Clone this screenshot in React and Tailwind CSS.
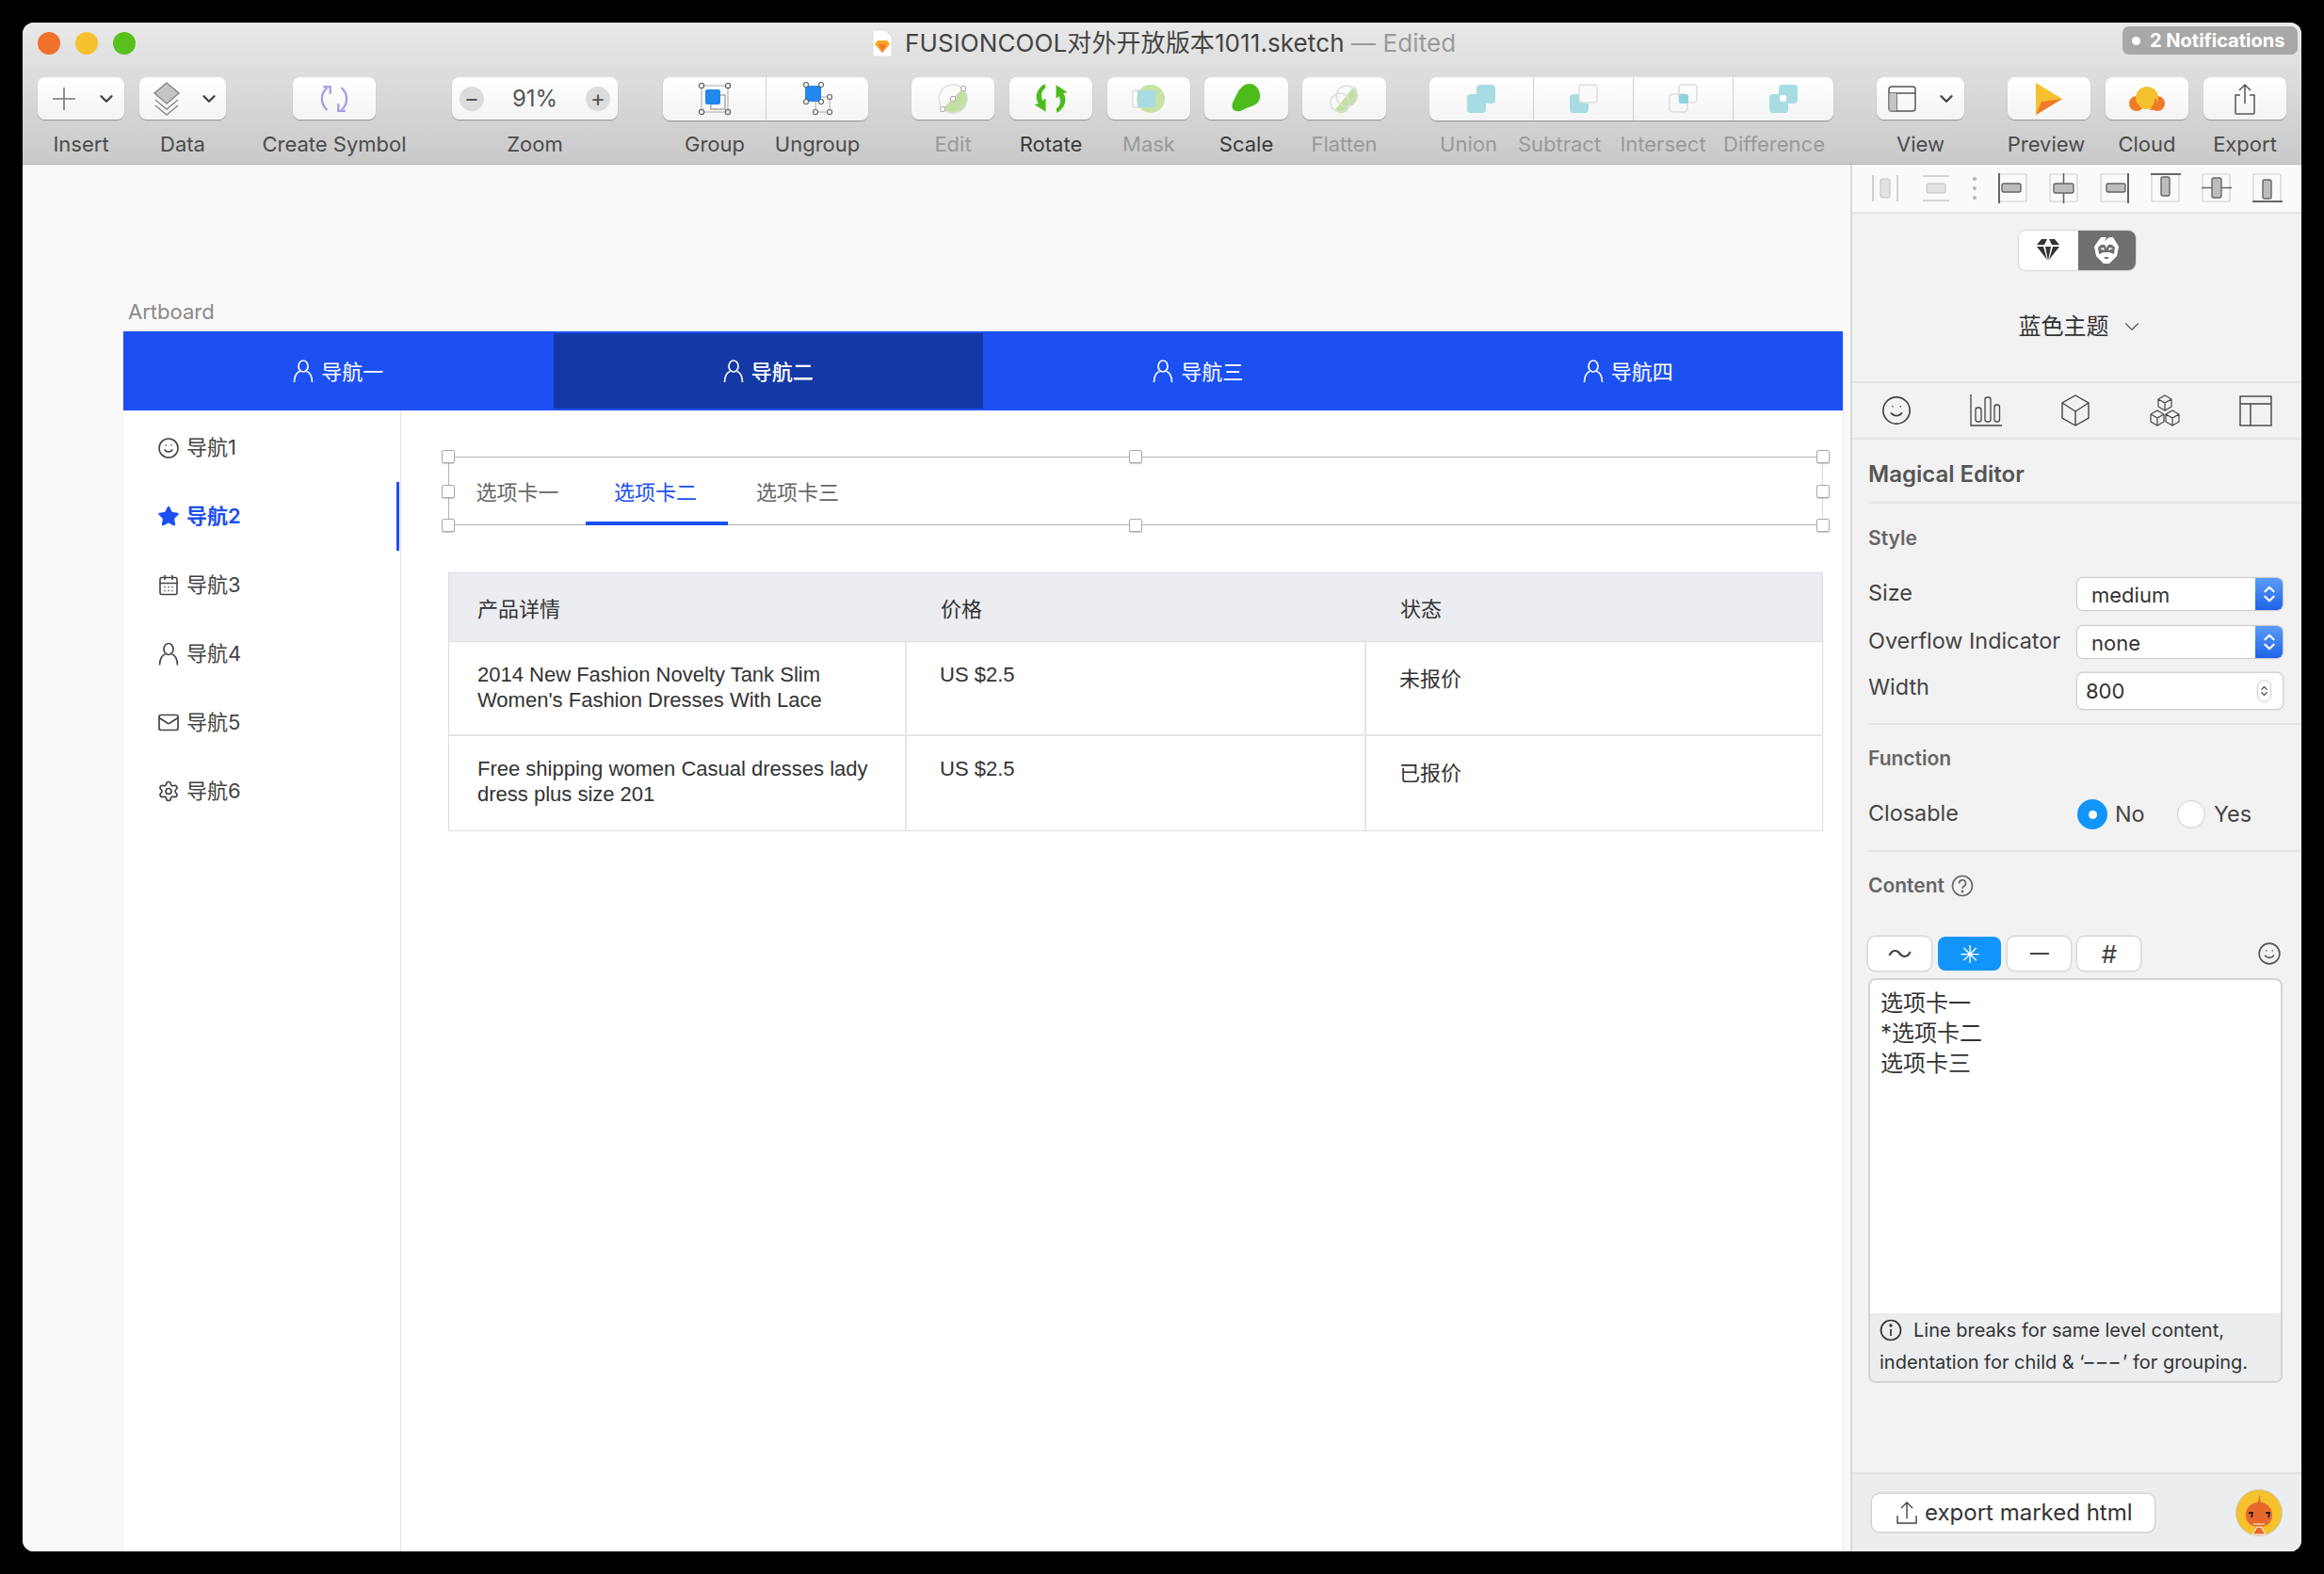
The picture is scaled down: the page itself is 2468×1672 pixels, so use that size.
import React from 'react';
import { ChevronDown, Smile, Star, CalendarDays, Mail, Settings, ChevronsUpDown } from 'lucide-react';

const Person = ({ className }) => (
  <svg viewBox="0 0 22 26" fill="none" stroke="currentColor" strokeWidth="1.7" className={className}>
    <ellipse cx="11" cy="8" rx="5" ry="6" />
    <path d="M1.5 25c0-7 3-11 6-11.5M20.5 25c0-7-3-11-6-11.5" />
  </svg>
);

function Tool({ label, w, ml = '', dim, dark, children }) {
  return (
    <div className={`flex flex-col items-center shrink-0 ${w} ${ml}`}>
      <div className="w-full h-[45px] bg-gradient-to-b from-white to-[#f4f4f4] rounded-[8px] shadow-[0_1px_1px_rgba(0,0,0,0.3)] flex items-center justify-center">
        {children}
      </div>
      <div className={`mt-[13px] text-[22px] leading-[26px] whitespace-nowrap ${dim ? 'text-[#9a9a9a]' : dark ? 'text-[#3a3a3a]' : 'text-[#4c4c4c]'}`}>{label}</div>
    </div>
  );
}

const IconEdit = () => (
  <svg width="34" height="34" viewBox="0 0 34 34" fill="none">
    <path d="M28 6.500A15 15 0 0 1 6.500 28z" fill="#c3e0a2" />
    <circle cx="17" cy="17" r="15" stroke="#dcdcdc" strokeWidth="1.4" />
    <path d="M28 6 6 28" stroke="#c8c8c8" strokeWidth="1" />
    {[[28, 6], [17, 17], [6, 28]].map(([x, y]) => <rect key={x} x={x - 2.5} y={y - 2.5} width="5" height="5" rx="1.500" fill="#fff" stroke="#aaa" />)}
  </svg>
);
const IconRotate = () => (
  <svg width="38" height="33" viewBox="0 0 34 30" fill="#4dbb1c">
    <path d="M11 1C3 6 1 14 5 20L1 21 12 28 12 15 9 17C7 12 8 7 12 5Z" />
    <path d="M23 29C31 24 33 16 29 10L33 9 22 2 22 15 25 13C27 18 26 23 22 25Z" />
  </svg>
);
const IconMask = () => (
  <svg width="36" height="32" viewBox="0 0 36 32">
    <rect x="1" y="7" width="8" height="18" rx="2" fill="#fff" stroke="#dcdcdc" strokeWidth="1.4" />
    <circle cx="20" cy="16" r="15" fill="#c6e2a5" />
    <rect x="6" y="7" width="19" height="18" rx="1" fill="#a9dbe2" />
  </svg>
);
const IconScale = () => (
  <svg width="31" height="31" viewBox="0 0 31 31">
    <path d="M19 0C26 0 31 7 30 15C29 21 24 23 18 25C14 26 10 30 5 29C0 28 0 24 1 20C3 16 5 12 7 8C10 3 14 0 19 0Z" fill="#4dbb1c" />
  </svg>
);
const IconFlatten = () => (
  <svg width="34" height="34" viewBox="0 0 34 34" fill="none">
    <path d="M26 3c5 4 6 10 4 15s-6 6-8 7c-1 5-6 8-11 7L6 29z" fill="#c3e0a2" />
    <circle cx="19" cy="14" r="11" stroke="#dcdcdc" strokeWidth="1.4" />
    <circle cx="12" cy="21" r="10" stroke="#dcdcdc" strokeWidth="1.4" />
    <path d="M27 3 6 29" stroke="#fff" strokeWidth="1" />
  </svg>
);

const Teal = ({ x, y }) => <rect x={x} y={y} width="20" height="20" rx="4" fill="#a8dce3" />;
const Ghost = ({ x, y, fill = 'none' }) => <rect x={x} y={y} width="19" height="19" rx="3.500" fill={fill} stroke="#dedede" strokeWidth="1.500" />;
const IconUnion = () => (
  <svg width="32" height="32" viewBox="0 0 32 32"><Teal x="11" y="1" /><Teal x="1" y="11" /><rect x="11" y="11" width="10" height="10" fill="#a8dce3" /></svg>
);
const IconSubtract = () => (
  <svg width="32" height="32" viewBox="0 0 32 32"><Teal x="1" y="11" /><Ghost x="11" y="1" fill="#fafafa" /></svg>
);
const IconIntersect = () => (
  <svg width="32" height="32" viewBox="0 0 32 32"><Ghost x="11" y="1" /><Ghost x="1" y="11" /><rect x="11" y="11" width="10" height="10" rx="2" fill="#8ed4df" /></svg>
);
const IconDifference = () => (
  <svg width="32" height="32" viewBox="0 0 32 32"><Teal x="11" y="1" /><Teal x="1" y="11" /><rect x="12" y="12" width="7" height="7" rx="2.500" fill="#fff" /></svg>
);

const IconGroup = () => (
  <svg width="36" height="36" viewBox="0 0 36 36" fill="none">
    <rect x="4" y="4" width="28" height="28" stroke="#aaa" strokeWidth="1" />
    <rect x="14" y="14" width="15" height="15" stroke="#aaa" strokeWidth="1.500" />
    <rect x="8" y="8" width="16" height="16" rx="2" fill="#2188ee" />
    {[[4, 4], [32, 4], [4, 32], [32, 32]].map(([x, y]) => <circle key={`${x}-${y}`} cx={x} cy={y} r="2.600" fill="#fff" stroke="#666" strokeWidth="1.300" />)}
  </svg>
);
const IconUngroup = () => (
  <svg width="34" height="36" viewBox="0 0 34 36" fill="none">
    <rect x="15" y="16" width="15" height="16" stroke="#aaa" strokeWidth="1" />
    <rect x="4" y="4" width="17" height="17" rx="2" fill="#2188ee" />
    {[[5, 3], [21, 3], [5, 21], [21, 21], [30, 16], [15, 32], [30, 32]].map(([x, y]) => <circle key={`${x}-${y}`} cx={x} cy={y} r="2.500" fill="#fff" stroke="#666" strokeWidth="1.200" />)}
  </svg>
);

const IconLayers = () => (
  <svg width="30" height="36" viewBox="0 0 30 36" fill="none" stroke="#8b8b8b" strokeWidth="1.5">
    <path d="M15 1 28 12 15 23 2 12z" fill="#c4c4c4" />
    <path d="M3 19l12 10 12-10M3 25l12 10 12-10" />
  </svg>
);
const IconSymbol = () => (
  <svg width="30" height="30" viewBox="0 0 28 28" fill="none" stroke="#a5a0e3" strokeWidth="2.200">
    <path d="M7 3C0 9 0 19 7 25M21 3c7 6 7 16 0 22" />
    <path d="M3 2h7v7M25 26h-7v-7" />
  </svg>
);
const IconPlay = () => (
  <svg width="32" height="36" viewBox="0 0 32 36">
    <path d="M2 1 30 18 2 35z" fill="#f6c12f" />
    <path d="M2 35 8 21 30 18z" fill="#ee7b28" />
  </svg>
);
const IconCloud = () => (
  <svg width="40" height="28" viewBox="0 0 40 28">
    <circle cx="9" cy="19" r="8" fill="#ee7b28" />
    <circle cx="31" cy="19" r="8" fill="#ee7b28" />
    <circle cx="20" cy="13" r="12" fill="#f6c12f" />
    <path d="M8 20c4-3 5 3 4 6H9zM29 13c3 3 2 8 0 13h-6c3-4 5-9 6-13z" fill="#ee7b28" />
  </svg>
);
const IconShare = ({ w = 24, h = 34, color = '#555' }) => (
  <svg width={w} height={h} viewBox="0 0 24 34" fill="none" stroke={color} strokeWidth="1.5">
    <path d="M12 22V2M6 8l6-6 6 6" />
    <path d="M7 13H2v19a1 1 0 0 0 1 1h18a1 1 0 0 0 1-1V13h-5" />
  </svg>
);

// align strip
const AlignBox = ({ bar, lines }) => (
  <svg width="32" height="32" viewBox="0 0 32 32" fill="none">
    {lines}
    {bar}
  </svg>
);
const hBar = <rect x="5" y="11" width="21" height="10" rx="2" fill="#bdbdbd" stroke="#666" strokeWidth="1.4" />;
const vBar = <rect x="11" y="5" width="10" height="21" rx="2" fill="#bdbdbd" stroke="#666" strokeWidth="1.4" />;
const frame = <rect x="1" y="1" width="29" height="29" rx="1" stroke="#d0d0d0" strokeWidth="1.2" />;

const MonkeyIcon = () => (
  <svg width="28" height="30" viewBox="0 0 28 30">
    <path d="M8 1h6l-2 4 5-4h4l6 10-2 10-8 8h-6l-8-8L1 11z" fill="#fff" />
    <path d="M5 12c3-4 6-4 8-2l1 3 1-3c2-2 5-2 8 2l-1 7-5-2h-6l-5 2z" fill="#707070" />
    <path d="M7 13l4-1 1 3zM21 13l-4-1-1 3zM9 20h10l-2 5h-6z" fill="#fff" />
    <path d="M11.500 22h5l-1 2h-3z" fill="#707070" />
  </svg>
);
const DiamondIcon = () => (
  <svg width="26" height="26" viewBox="0 0 26 26" fill="#333">
    <path d="M6 1h6L9 7H1zM14 1h6l5 6h-8zM1 9h7l4 14zM10 9h6l-3 15zM18 9h7L14 23z" />
  </svg>
);

function SectionTitle({ children, className = '' }) {
  return <div className={`text-[21px] leading-[26px] font-semibold text-[#666] ${className}`}>{children}</div>;
}

function Select({ value, className = '' }) {
  return (
    <div className={`flex h-[34px] w-[218px] rounded-[6px] bg-white shadow-[0_0_1px_1px_rgba(0,0,0,0.18)] overflow-hidden ${className}`}>
      <div className="flex-1 pl-[15px] text-[22px] leading-[36px] text-[#333]">{value}</div>
      <div className="w-[29px] bg-gradient-to-b from-[#5a9cf6] to-[#1e63e8] flex items-center justify-center text-white">
        <ChevronsUpDown size={22} strokeWidth={2.4} />
      </div>
    </div>
  );
}

const MarkButton = ({ children, active }) => (
  <div className={`h-[36px] w-[67px] shrink-0 rounded-[8px] flex items-center justify-center text-[26px] ${active ? 'bg-[#1295fb] text-white' : 'bg-white text-[#444] shadow-[0_0_0_1.5px_#d8d8d8]'}`}>{children}</div>
);

const Handle = ({ className }) => (
  <div className={`absolute w-[14px] h-[14px] rounded-[2px] bg-white border border-[#aaa] shadow-[0_1px_1px_rgba(0,0,0,0.2)] ${className}`} />
);

const topNav = ['导航一', '导航二', '导航三', '导航四'];
const sideNav = [
  { label: '导航1', icon: <Smile size={24} strokeWidth={1.6} /> },
  { label: '导航2', icon: <Star size={25} fill="currentColor" strokeWidth={1.5} />, active: true },
  { label: '导航3', icon: <CalendarDays size={25} strokeWidth={1.6} /> },
  { label: '导航4', icon: <Person className="w-[22px] h-[27px]" /> },
  { label: '导航5', icon: <Mail size={25} strokeWidth={1.7} /> },
  { label: '导航6', icon: <Settings size={25} strokeWidth={1.7} /> },
];
const rows = [
  { name: ['2014 New Fashion Novelty Tank Slim', "Women's Fashion Dresses With Lace"], price: 'US $2.5', status: '未报价' },
  { name: ['Free shipping women Casual dresses lady', 'dress plus size 201'], price: 'US $2.5', status: '已报价' },
];

export default function App() {
  return (
    <div className="w-[2468px] h-[1672px] bg-black p-[24px] overflow-hidden font-['Inter','Noto_Sans_CJK_SC',sans-serif]">
      <div className="w-[2420px] h-[1624px] rounded-[12px] overflow-hidden flex flex-col bg-[#f9f9f9]">
        {/* toolbar */}
        <div className="h-[151px] shrink-0 bg-gradient-to-b from-[#e9e9e9] to-[#c9c9c9] border-b border-[#b5b5b5] relative">
          <div className="h-[44px] mb-[14px] flex items-center pl-[16px] gap-[16px]">
            <span className="w-[24px] h-[24px] rounded-full bg-[#f0702c]" />
            <span className="w-[24px] h-[24px] rounded-full bg-[#f7c02f]" />
            <span className="w-[24px] h-[24px] rounded-full bg-[#59c11d]" />
            <div className="ml-[766px] flex items-center">
              <svg width="22" height="30" viewBox="0 0 22 30" className="mr-[13px]">
                <path d="M1 1h13l7 7v21H1z" fill="#fff" stroke="#ddd" />
                <path d="M6 12h10l3 4-8 9-8-9z" fill="#f6a723" />
                <path d="M7 16h8l-4 9z" fill="#ee7b28" />
              </svg>
              <span className="text-[26px] leading-[44px] tracking-[0.1px] text-[#444] whitespace-nowrap">FUSIONCOOL对外开放版本1011.sketch <span className="text-[#9a9a9a]">— Edited</span></span>
            </div>
          </div>
          <div className="absolute top-[4px] right-[4px] w-[186px] h-[30px] rounded-[7px] bg-[#a8a8a8] text-white font-bold text-[20px] flex items-center pl-[10px] gap-[10px]">
            <span className="w-[9px] h-[9px] rounded-full bg-white" />2 Notifications
          </div>
          <div className="flex pl-[16px]">
            <Tool label="Insert" w="w-[92px]">
              <div className="flex items-center gap-[21px] pl-[6px]">
                <svg width="26" height="26" viewBox="0 0 26 26" stroke="#777" strokeWidth="1.6"><path d="M13 1v24M1 13h24" /></svg>
                <ChevronDown size={22} strokeWidth={2.6} className="text-[#444]" />
              </div>
            </Tool>
            <Tool label="Data" w="w-[92px]" ml="ml-[16px]">
              <div className="flex items-center gap-[19px] pl-[6px]">
                <IconLayers />
                <ChevronDown size={22} strokeWidth={2.6} className="text-[#444]" />
              </div>
            </Tool>
            <Tool label="Create Symbol" w="w-[88px]" ml="ml-[71px]"><IconSymbol /></Tool>
            <Tool label="Zoom" w="w-[176px]" ml="ml-[81px]">
              <div className="w-full flex items-center justify-between px-[8px] text-[#555]">
                <span className="w-[26px] h-[26px] rounded-full bg-[#dcdcdc] flex items-center justify-center text-[24px] leading-none">−</span>
                <span className="text-[24px]">91%</span>
                <span className="w-[26px] h-[26px] rounded-full bg-[#dcdcdc] flex items-center justify-center text-[24px] leading-none">+</span>
              </div>
            </Tool>
            <div className="ml-[48px] flex flex-col w-[218px]">
              <div className="h-[46px] bg-gradient-to-b from-white to-[#f4f4f4] rounded-[8px] shadow-[0_1px_1px_rgba(0,0,0,0.3)] flex">
                <div className="w-[110px] flex items-center justify-center border-r border-[#cfcfcf]"><IconGroup /></div>
                <div className="flex-1 flex items-center justify-center"><IconUngroup /></div>
              </div>
              <div className="mt-[12px] flex text-[22px] leading-[26px] text-[#4c4c4c] text-center">
                <div className="w-[110px]">Group</div>
                <div className="flex-1">Ungroup</div>
              </div>
            </div>
            <Tool label="Edit" dim w="w-[88px]" ml="ml-[46px]"><IconEdit /></Tool>
            <Tool label="Rotate" dark w="w-[88px]" ml="ml-[16px]"><IconRotate /></Tool>
            <Tool label="Mask" dim w="w-[88px]" ml="ml-[16px]"><IconMask /></Tool>
            <Tool label="Scale" dark w="w-[89px]" ml="ml-[15px]"><IconScale /></Tool>
            <Tool label="Flatten" dim w="w-[89px]" ml="ml-[15px]"><IconFlatten /></Tool>
            <div className="ml-[46px] flex flex-col w-[429px]">
              <div className="h-[46px] bg-gradient-to-b from-white to-[#f4f4f4] rounded-[8px] shadow-[0_1px_1px_rgba(0,0,0,0.3)] flex">
                <div className="w-[111px] flex items-center justify-center border-r border-[#cfcfcf]"><IconUnion /></div>
                <div className="w-[106px] flex items-center justify-center border-r border-[#cfcfcf]"><IconSubtract /></div>
                <div className="w-[106px] flex items-center justify-center border-r border-[#cfcfcf]"><IconIntersect /></div>
                <div className="flex-1 flex items-center justify-center"><IconDifference /></div>
              </div>
              <div className="mt-[12px] flex text-[22px] leading-[26px] text-[#9a9a9a] text-center whitespace-nowrap">
                <div className="w-[83px]">Union</div>
                <div className="w-[110px]">Subtract</div>
                <div className="w-[110px]">Intersect</div>
                <div className="flex-1">Difference</div>
              </div>
            </div>
            <Tool label="View" w="w-[93px]" ml="ml-[46px]">
              <div className="flex items-center gap-[21px] pl-[4px]">
                <svg width="30" height="28" viewBox="0 0 30 28" fill="none" stroke="#555" strokeWidth="1.5">
                  <rect x="1" y="1" width="28" height="26" rx="3" />
                  <path d="M1 8h28M9 8v19" />
                  <rect x="1.5" y="8" width="7.5" height="18.5" fill="#c4c4c4" stroke="none" />
                </svg>
                <ChevronDown size={22} strokeWidth={2.6} className="text-[#444]" />
              </div>
            </Tool>
            <Tool label={<span className="block pr-[6px]">Preview</span>} w="w-[88px]" ml="ml-[46px]"><IconPlay /></Tool>
            <Tool label="Cloud" w="w-[88px]" ml="ml-[16px]"><IconCloud /></Tool>
            <Tool label="Export" w="w-[88px]" ml="ml-[16px]"><IconShare /></Tool>
          </div>
        </div>

        <div className="flex-1 flex min-h-0">
          {/* canvas */}
          <div className="flex-1 min-w-0 bg-[#f9f9f9] pl-[107px] pr-[8px] pt-[143px] flex flex-col">
            <div className="text-[22px] leading-[27px] text-[#8a8a8a] pl-[5px] mb-[7px]">Artboard</div>
            <div className="flex-1 bg-white flex flex-col min-h-0 shadow-[0_0_2px_rgba(0,0,0,0.15)]">
              <div className="h-[84px] shrink-0 bg-[#1c50f2] flex py-[2px] text-white">
                {topNav.map((t, i) => (
                  <div key={t} className={`flex-1 flex items-center justify-center gap-[8px] text-[22px] ${i === 1 ? 'bg-[#1438a6] font-medium' : ''}`}>
                    <Person className="w-[22px] h-[26px]" />
                    <span className="pt-[3px]">{t}</span>
                  </div>
                ))}
              </div>
              <div className="flex-1 flex min-h-0">
                <div className="w-[295px] shrink-0 border-r border-[#e2e2e2] pt-[3px]">
                  {sideNav.map(item => (
                    <div key={item.label} className={`h-[73px] flex items-center pl-[36px] gap-[7px] text-[22px] border-r-[3px] mr-[1px] ${item.active ? 'text-[#1c50f2] font-semibold border-[#1c50f2]' : 'text-[#444] border-transparent'}`}>
                      <span className="w-[24px] flex justify-center">{item.icon}</span>
                      {item.label}
                    </div>
                  ))}
                </div>
                <div className="flex-1 min-w-0 pl-[50px] pr-[21px] pt-[49px]">
                  <div className="relative h-[73px] border border-[#b4b4b4] border-r-[#d8d8d8] flex text-[22px] text-[#666]">
                    <Handle className="-top-[8px] -left-[8px]" />
                    <Handle className="-top-[8px] left-1/2 -ml-[7px]" />
                    <Handle className="-top-[8px] -right-[8px]" />
                    <Handle className="top-[29px] -left-[8px]" />
                    <Handle className="top-[29px] -right-[8px]" />
                    <Handle className="-bottom-[8px] -left-[8px]" />
                    <Handle className="-bottom-[8px] left-1/2 -ml-[7px]" />
                    <Handle className="-bottom-[8px] -right-[8px]" />
                    <div className="w-[145px] flex items-center justify-center pt-[3px]">选项卡一</div>
                    <div className="w-[151px] flex items-center justify-center text-[#1c50f2] border-b-4 border-[#1c50f2] -mb-[1px] pt-[6px] pr-[3px]">选项卡二</div>
                    <div className="w-[151px] flex items-center justify-center pt-[3px] pr-[3px]">选项卡三</div>
                  </div>
                  <div className="mt-[50px] border border-[#dedede] font-['Liberation_Sans','Noto_Sans_CJK_SC',sans-serif]">
                    <div className="h-[73px] bg-[#ebedf0] flex items-center pt-[5px] text-[22px] text-[#333] border-b border-[#dedede] font-['Inter','Noto_Sans_CJK_SC',sans-serif]">
                      <div className="w-[486px] pl-[30px]">产品详情</div>
                      <div className="w-[488px] pl-[36px]">价格</div>
                      <div className="flex-1 pl-[36px]">状态</div>
                    </div>
                    {rows.map((row, i) => (
                      <div key={i} className={`h-[100px] flex text-[22px] leading-[27px] text-[#333] ${i === 0 ? 'border-b-2 border-[#e6e6e6]' : ''}`}>
                        <div className="w-[486px] pl-[30px] pt-[21px] border-r-2 border-[#e6e6e6] whitespace-nowrap">
                          {row.name.map(n => <div key={n}>{n}</div>)}
                        </div>
                        <div className="w-[488px] pl-[35px] pt-[21px] border-r-2 border-[#e6e6e6]">{row.price}</div>
                        <div className="flex-1 pl-[35px] pt-[26px] font-['Inter','Noto_Sans_CJK_SC',sans-serif]">{row.status}</div>
                      </div>
                    ))}
                  </div>
                </div>
              </div>
            </div>
          </div>

          {/* inspector */}
          <div className="w-[479px] shrink-0 border-l-2 border-[#d8d8d8] bg-[#f2f2f2] flex flex-col text-[#444]">
            <div className="h-[52px] shrink-0 bg-[#fafafa] border-b-2 border-[#e4e4e4] pl-[19px] flex items-center">
              <div className="flex gap-[22px] items-center">
                <AlignBox lines={<path d="M3 2v28M29 2v28" stroke="#c8c8c8" strokeWidth="1.6" />} bar={<rect x="11" y="6" width="10" height="20" rx="2" fill="#e2e2e2" stroke="#c0c0c0" />} />
                <AlignBox lines={<path d="M2 3h28M2 29h28" stroke="#c8c8c8" strokeWidth="1.6" />} bar={<rect x="6" y="11" width="20" height="10" rx="2" fill="#e2e2e2" stroke="#c0c0c0" />} />
                <svg width="6" height="26" viewBox="0 0 6 26" fill="#b5b5b5"><circle cx="3" cy="3" r="2" /><circle cx="3" cy="13" r="2" /><circle cx="3" cy="23" r="2" /></svg>
                <AlignBox lines={<>{frame}<path d="M1 0v32" stroke="#666" strokeWidth="2" /></>} bar={<rect x="4" y="11" width="20" height="9" rx="2" fill="#bdbdbd" stroke="#666" strokeWidth="1.4" />} />
                <AlignBox lines={<>{frame}<path d="M15.5 0v32" stroke="#666" strokeWidth="1.6" /></>} bar={hBar} />
                <AlignBox lines={<>{frame}<path d="M30 0v32" stroke="#666" strokeWidth="2" /></>} bar={<rect x="7" y="11" width="20" height="9" rx="2" fill="#bdbdbd" stroke="#666" strokeWidth="1.4" />} />
                <AlignBox lines={<>{frame}<path d="M0 1h32" stroke="#666" strokeWidth="2" /></>} bar={<rect x="11" y="4" width="9" height="20" rx="2" fill="#bdbdbd" stroke="#666" strokeWidth="1.4" />} />
                <AlignBox lines={<>{frame}<path d="M0 15.5h32" stroke="#666" strokeWidth="1.6" /></>} bar={vBar} />
                <AlignBox lines={<>{frame}<path d="M0 30h32" stroke="#666" strokeWidth="2" /></>} bar={<rect x="11" y="7" width="9" height="20" rx="2" fill="#bdbdbd" stroke="#666" strokeWidth="1.4" />} />
              </div>
            </div>

            <div className="h-[180px] shrink-0 border-b-2 border-[#e4e4e4] flex flex-col items-center pt-[18px]">
              <div className="flex w-[124px] h-[42px] rounded-[8px] overflow-hidden shadow-[0_0_1px_1px_rgba(0,0,0,0.12)]">
                <div className="w-[63px] bg-white flex items-center justify-center"><DiamondIcon /></div>
                <div className="flex-1 bg-[#707070] flex items-center justify-center"><MonkeyIcon /></div>
              </div>
              <div className="mt-[43px] flex items-center gap-[11px] text-[24px] leading-[34px] text-[#333] ml-[9px]">
                蓝色主题 <ChevronDown size={26} strokeWidth={1} className="text-[#555]" />
              </div>
            </div>

            <div className="h-[60px] shrink-0 border-b-2 border-[#e4e4e4] flex items-center pl-[30px] gap-[64px] text-[#444]">
              <Smile size={34} strokeWidth={1.2} />
              <svg width="34" height="34" viewBox="0 0 34 34" fill="none" stroke="#444" strokeWidth="1.3" className="-ml-[3px]">
                <path d="M1 0v33h33" />
                <rect x="6" y="14" width="6" height="15" rx="2.5" />
                <rect x="16" y="3" width="6" height="26" rx="2.5" />
                <rect x="26" y="11" width="5.5" height="18" rx="2.5" />
              </svg>
              <svg width="30" height="34" viewBox="0 0 30 34" fill="none" stroke="#444" strokeWidth="1.4" className="-ml-[1px]">
                <path d="M15 1 29 9v16l-14 8-14-8V9z" />
                <path d="M1 9l14 9 14-9M15 18v15" />
              </svg>
              <svg width="34" height="34" viewBox="0 0 34 34" fill="none" stroke="#444" strokeWidth="1.2" className="-ml-[1px]">
                <path d="M17 1l7 4v8l-7 4-7-4V5zM10 5l7 4 7-4M17 9v8" />
                <path d="M9 17l7 4v8l-7 4-7-4v-8zM2 21l7 4 7-4M9 25v8" />
                <path d="M25 17l7 4v8l-7 4-7-4v-8zM18 21l7 4 7-4M25 25v8" />
              </svg>
              <svg width="35" height="33" viewBox="0 0 35 33" fill="none" stroke="#444" strokeWidth="1.4" className="-ml-[2px]">
                <rect x="1" y="1" width="33" height="31" />
                <path d="M1 9h33M12 9v23" />
              </svg>
            </div>

            <div className="pl-[17px] pr-[20px]">
              <div className="h-[68px] flex items-center pt-[8px] border-b-2 border-[#e4e4e4] -mr-[20px] text-[24px] font-semibold text-[#555]">Magical Editor</div>
              <SectionTitle className="mt-[24px]">Style</SectionTitle>
              <div className="mt-[29px] flex items-center justify-between text-[23.4px] leading-[28px]">
                <span className="pb-[3px]">Size</span><Select value="medium" />
              </div>
              <div className="mt-[17px] flex items-center justify-between text-[23.4px] leading-[28px]">
                <span className="pb-[3px]">Overflow Indicator</span><Select value="none" />
              </div>
              <div className="mt-[16px] flex items-center justify-between text-[23.4px] leading-[28px]">
                <span className="pb-[8px]">Width</span>
                <div className="w-[218px] h-[38px] rounded-[6px] bg-white shadow-[0_0_0_1.5px_#d4d4d4] flex items-center pl-[9px] pr-[12px] justify-between text-[22px] text-[#333]">
                  800
                  <span className="w-[15px] h-[24px] rounded-full border border-[#ccc] flex items-center justify-center"><ChevronsUpDown size={14} strokeWidth={2} /></span>
                </div>
              </div>
              <div className="mt-[15px] border-b-2 border-[#e4e4e4] -mr-[20px]" />
              <SectionTitle className="mt-[23px]">Function</SectionTitle>
              <div className="mt-[30px] flex items-center text-[23.4px] leading-[28px] h-[32px]">
                <span className="w-[222px] pb-[3px]">Closable</span>
                <span className="w-[32px] h-[32px] rounded-full bg-[#1295fb] flex items-center justify-center"><span className="w-[9px] h-[9px] rounded-full bg-white" /></span>
                <span className="ml-[8px] w-[66px]">No</span>
                <span className="w-[30px] h-[30px] rounded-full bg-white border border-[#ccc]" />
                <span className="ml-[9px]">Yes</span>
              </div>
              <div className="mt-[22px] border-b-2 border-[#e4e4e4] -mr-[20px]" />
              <div className="mt-[23px] flex items-center gap-[7px]">
                <SectionTitle>Content</SectionTitle>
                <svg width="24" height="24" viewBox="0 0 24 24" fill="none" stroke="#666" strokeWidth="1.6">
                  <circle cx="12" cy="12" r="10.5" />
                  <path d="M8.5 9.5a3.5 3.5 0 1 1 5 3c-1 .6-1.5 1-1.5 2.5" />
                  <circle cx="12" cy="18" r=".6" fill="#666" />
                </svg>
              </div>
              <div className="mt-[41px] flex items-center gap-[7px]">
                <MarkButton>～</MarkButton>
                <MarkButton active>✳</MarkButton>
                <MarkButton><span className="w-[20px] h-[2.5px] bg-[#444]" /></MarkButton>
                <MarkButton><span className="italic">#</span></MarkButton>
                <Smile size={26} strokeWidth={1.5} className="ml-[117px] shrink-0 text-[#555]" />
              </div>
              <div className="mt-[8px] h-[430px] rounded-[8px] border-2 border-[#d4d4d4] bg-white overflow-hidden flex flex-col">
                <div className="flex-1 px-[11px] pt-[9px] text-[24px] leading-[32px] text-[#333]">
                  <div>选项卡一</div>
                  <div>*选项卡二</div>
                  <div>选项卡三</div>
                </div>
                <div className="h-[72px] bg-[#ebedee] px-[10px] pt-[1px] text-[20px] leading-[34px] text-[#333] whitespace-nowrap">
                  <div className="flex items-center gap-[12px]">
                    <svg width="24" height="24" viewBox="0 0 24 24" fill="none" stroke="#333" strokeWidth="1.7">
                      <circle cx="12" cy="12" r="10.5" />
                      <path d="M12 11v7" />
                      <circle cx="12" cy="7" r=".8" fill="#333" />
                    </svg>
                    Line breaks for same level content,
                  </div>
                  <div>indentation for child &amp; ‘<span className="tracking-[3.5px]">–––</span>’ for grouping.</div>
                </div>
              </div>
            </div>

            <div className="mt-auto h-[84px] shrink-0 border-t-2 border-[#e0e0e0] bg-[#ebedee] flex items-center pl-[21px] pr-[20px] justify-between">
              <div className="w-[300px] h-[40px] rounded-[8px] bg-white shadow-[0_0_0_1.5px_#d4d4d4] flex items-center pl-[26px] gap-[8px] text-[24px] text-[#333]">
                <svg width="22" height="24" viewBox="0 0 22 24" fill="none" stroke="#444" strokeWidth="1.4">
                  <path d="M11 18V1M5 7l6-6 6 6M1 15v8h20v-8" />
                </svg>
                export marked html
              </div>
              <svg width="50" height="50" viewBox="0 0 50 50">
                <circle cx="25" cy="25" r="24.5" fill="#f5c12c" stroke="#c9c9c9" />
                <path d="M25 6c-1 4 1 5-2 8-7 1-13 6-12 15 1 7 6 11 14 11s13-4 14-11c1-8-5-14-11-15-3-2-1-5-3-8z" fill="#e8682b" />
                <path d="M14 25h4l-1 5M32 25h4l-1 5" stroke="#222" strokeWidth="1.8" fill="none" />
                <path d="M19 37h12M18 48l5-8h4l5 8z" fill="#e8682b" stroke="#fff" strokeWidth="1" />
              </svg>
            </div>
          </div>
        </div>
      </div>
    </div>
  );
}
